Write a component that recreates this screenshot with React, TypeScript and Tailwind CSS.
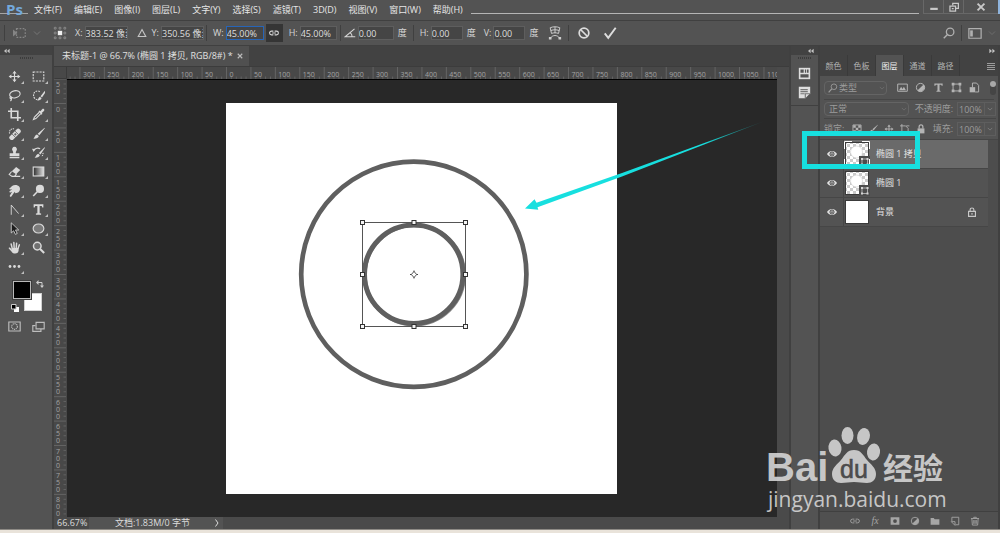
import type { ReactNode } from "react";
import clsx from "clsx";

type IconProps = { children: ReactNode; className?: string };

/* 16x16 grid, drawn in the current text colour */
function Icon({ children, className = "h-3.5 w-3.5" }: IconProps) {
  return (
    <svg
      viewBox="0 0 16 16"
      className={clsx("shrink-0", className)}
      fill="none"
      stroke="currentColor"
      strokeWidth="1.4"
      aria-hidden="true"
    >
      {children}
    </svg>
  );
}

const solid = { fill: "currentColor", stroke: "none" };

const menus = [
  "文件(F)",
  "编辑(E)",
  "图像(I)",
  "图层(L)",
  "文字(Y)",
  "选择(S)",
  "滤镜(T)",
  "3D(D)",
  "视图(V)",
  "窗口(W)",
  "帮助(H)",
];

const tools: { name: string; art: ReactNode; plain?: boolean }[] = [
  {
    name: "移动工具",
    art: (
      <>
        <path d="M8 3v10M3 8h10" />
        <path {...solid} d="M8 .8l2.6 3.4H5.4zM8 15.2l2.6-3.4H5.4zM.8 8l3.4-2.6v5.2zM15.2 8l-3.4-2.6v5.2z" />
      </>
    ),
  },
  {
    name: "矩形选框工具",
    art: <rect x="1.5" y="2.5" width="13" height="11" strokeDasharray="2.6 1.3" />,
  },
  {
    name: "套索工具",
    art: (
      <>
        <ellipse cx="8.5" cy="6.5" rx="6.5" ry="4.3" transform="rotate(-12 8.5 6.5)" />
        <path d="M3.5 9.6c-1.6.8-1.3 2.5.4 2.1 1.5-.4.8-2.4-.6-1.8M4.2 12c.2 1.2-.4 2-1.2 2.8" />
      </>
    ),
  },
  {
    name: "快速选择工具",
    art: (
      <>
        <path strokeDasharray="2 1.2" d="M9.5 3.4A4.8 5.3 0 1 0 7 13" />
        <path {...solid} d="M15.8 2.2L10.5 9l1.8 1.6 3.9-6zM9.8 9.6l2 1.8c-.8 2-2.8 3-5.3 2.6 1.4-1 1.1-3.6 3.3-4.4z" />
      </>
    ),
  },
  {
    name: "裁剪工具",
    art: <path strokeWidth="2" d="M4 0v12h12M0 4h12v12" />,
  },
  {
    name: "吸管工具",
    art: (
      <>
        <path d="M9 5.2L3 11.2 1.8 14.2 4.8 13l6-6" />
        <path {...solid} d="M8 4.2l1.3-1.1 1 .9 2.2-2.6c1.6-1.4 3.6.6 2.2 2.2L12 6l.9 1L11.8 8.2z" />
      </>
    ),
  },
  {
    name: "污点修复画笔工具",
    art: (
      <>
        <path strokeDasharray="1.6 1" d="M2 8a4.5 4.5 0 0 1 6-5.5" />
        <rect {...solid} x="0" y="6.2" width="17" height="6" rx="2.5" transform="rotate(-45 8.5 9)" />
        <path stroke="#535353" strokeWidth=".9" d="M5 8.6l4.4 4.4M8.6 5l4.4 4.4M7.5 9h3M9 7.5v3" />
      </>
    ),
  },
  {
    name: "画笔工具",
    art: <path {...solid} d="M15.5 1L7 8.4l2 1.9L15.8 1.5zM6.2 9.1l2.2 2c-.6 2.5-3.4 3.6-7 3.2 2.1-1.2 1.9-4.6 4.8-5.2z" />,
  },
  {
    name: "仿制图章工具",
    art: <path {...solid} d="M8 1a3 3 0 0 1 2.4 4.8C9.5 7 9.6 8 9.7 9H14v3.5H2V9h4.3c.1-1 .2-2-.7-3.2A3 3 0 0 1 8 1zM2 13.4h12V15H2z" />,
  },
  {
    name: "历史记录画笔工具",
    art: (
      <>
        <path d="M2 5.5C4 2.5 8 2 10 3.5" />
        <path {...solid} d="M0 3.5l4.5.2L2 7.5zM15.5 1.5L8.5 8.7l1.9 1.8L16 2zM7.7 9.4l2 1.9c-.6 2.3-3.2 3.3-6.6 3 2-1.2 1.9-4.4 4.6-4.9z" />
        <path strokeDasharray="1.5 1" d="M13.5 8.5c.2 2-.5 3.4-2 4.5" />
      </>
    ),
  },
  {
    name: "橡皮擦工具",
    art: (
      <>
        <path {...solid} d="M10 2.5l5 3.5-5 5.5-5.3-3.8z" />
        <path d="M4.5 8L1.5 11.5 5 14h3l2.5-3M8 14h7" />
      </>
    ),
  },
  {
    name: "渐变工具",
    art: (
      <>
        <defs>
          <linearGradient id="toolGradient">
            <stop offset="0" stopColor="#2a2a2a" />
            <stop offset="1" stopColor="#e2e2e2" />
          </linearGradient>
        </defs>
        <rect x="1.5" y="2.5" width="13" height="11" fill="url(#toolGradient)" />
      </>
    ),
  },
  {
    name: "涂抹工具",
    art: <path {...solid} d="M5 2.5C7.5.5 12 .8 14 3.5c1.5 2.5.6 5.5-1.5 7L9 11.5l-.5-2L6.5 12l-2.3 3.5c-1 .8-2.4 0-1.9-1.3L5 9.5l-2 1c-1.5.3-1.8-1.3-.8-2l3-2-2.5.3C1.3 6.8 1.3 5.2 2.5 4.8z" />,
  },
  {
    name: "减淡工具",
    art: (
      <>
        <circle {...solid} cx="9.8" cy="6" r="5" />
        <path strokeWidth="2" d="M6.5 9.5L1.5 14.8" />
      </>
    ),
  },
  {
    name: "钢笔工具",
    art: <path d="M4 14.5V2.5l9 10.5" strokeWidth="1.1" />,
  },
  {
    name: "横排文字工具",
    art: <path {...solid} d="M2 1.5h12V5.500h-1.300L12 3.600H9.400v8.900l1.800.5v1.500H4.800V13l1.800-.5V3.600H4L3.300 5.500H2z" />,
  },
  {
    name: "路径选择工具",
    art: <path d="M4 1v12.500l2.900-2.700 2.200 4.400 2.300-1.100-2.200-4.300h4z" fill="#1c1c1c" strokeWidth="1" />,
  },
  {
    name: "椭圆工具",
    art: <ellipse cx="8" cy="8" rx="6.6" ry="5.6" fill="#7b7b7b" />,
  },
  {
    name: "抓手工具",
    art: (
      <>
        <path {...solid} d="M4.300 8.500h8.800v3c0 2.500-1.800 4-4.400 4-2.300 0-3.300-.8-4.400-2.600L.9 9.300c-.3-1.300 1-1.700 1.800-.9l2.300 2.300z" />
        <path strokeLinecap="round" strokeWidth="1.8" d="M5.200 9L3.900 3.700M7.600 8.500L7.200 1.900M10.100 8.500l.5-5.900M12.400 9l1.600-4.300" />
      </>
    ),
  },
  {
    name: "缩放工具",
    plain: true,
    art: (
      <>
        <circle cx="6.5" cy="6.3" r="4.7" strokeWidth="1.8" fill="#707070" />
        <path strokeWidth="2.5" d="M10 9.800l5 5" />
      </>
    ),
  },
  {
    name: "编辑工具栏",
    art: (
      <g {...solid}>
        <circle cx="2.5" cy="8" r="1.7" />
        <circle cx="8" cy="8" r="1.7" />
        <circle cx="13.5" cy="8" r="1.7" />
      </g>
    ),
  },
];

function Chevron({ className = "h-2 w-2" }: { className?: string }) {
  return (
    <Icon className={className}>
      <path d="M2 5l6 6 6-6" />
    </Icon>
  );
}

function Collapse({ flip }: { flip?: boolean }) {
  return (
    <Icon className={clsx("h-1.5 w-1.5 text-[#c4c4c4]", flip && "rotate-180")}>
      <path {...solid} d="M7 2v12L0 8zM15 2v12L8 8z" />
    </Icon>
  );
}

function Grip() {
  return (
    <div className="mx-auto flex gap-px py-0.5">
      {[0, 1, 2, 3, 4, 5, 6].map((i) => (
        <span key={i} className="h-0.5 w-px bg-[#3c3c3c]" />
      ))}
    </div>
  );
}

function MenuBar() {
  return (
    <header className="flex h-5 shrink-0 items-start bg-[#535353]">
      <div className="relative flex h-full w-[34px] shrink-0 items-start pl-1.5">
        <span className="absolute left-0 top-[13px] h-px w-7 bg-[#a5a5a5]" />
        <span className="relative font-['Open_Sans',sans-serif] text-[15px]/[18px] font-bold text-[#73a9dc]">
          Ps
        </span>
      </div>
      <nav className="flex h-full shrink-0 items-center gap-3">
        {menus.map((m) => (
          <button key={m} className="whitespace-nowrap text-[#e6e6e6]">
            {m}
          </button>
        ))}
      </nav>
      <div className="ml-2 mr-1 mt-[13px] h-px flex-1 bg-[#b5b5b5]" />
      <div className="flex h-3.5 shrink-0 divide-x divide-[#686868] border-b border-l border-[#686868] text-[#c9c9c9]">
        <button aria-label="最小化" className="flex w-5 items-center justify-center">
          <Icon className="h-2.5 w-2.5">
            <path strokeWidth="3.5" d="M2 11h12" />
          </Icon>
        </button>
        <button aria-label="还原" className="flex w-5 items-center justify-center">
          <Icon className="h-2.5 w-2.5">
            <path strokeWidth="2" d="M6 5V2h9v8h-4M1.500 6.500h9v8h-9zM4.500 10.500h3" />
          </Icon>
        </button>
        <button aria-label="关闭" className="flex w-[34px] items-center justify-center">
          <Icon className="h-2.5 w-2.5">
            <path strokeWidth="3" d="M2.500 2.500l11 11M13.500 2.500l-11 11" />
          </Icon>
        </button>
      </div>
      <div className="h-3.5 w-0.5 shrink-0 bg-[#8fb4dd]" />
    </header>
  );
}

type FieldProps = {
  label: ReactNode;
  name: string;
  value: string;
  width: string;
  unit?: string;
  active?: boolean;
};

function Field({ label, name, value, width, unit, active }: FieldProps) {
  return (
    <label className="flex shrink-0 items-center gap-0.5 text-[#d6d6d6]">
      {label}
      <input
        aria-label={name}
        defaultValue={value}
        className={clsx(
          "h-3.5 border bg-[#454545] text-[#dedede] outline-none",
          width,
          active ? "border-[#2765b8]" : "border-[#5e5e5e]",
        )}
      />
      {unit && <span className="ml-0.5">{unit}</span>}
    </label>
  );
}

function Divider() {
  return <span className="h-4 w-px shrink-0 bg-[#404040]" />;
}

function OptionsBar() {
  return (
    <div className="flex h-[26px] shrink-0 items-center border-y border-[#404040] bg-[#535353] pl-1">
      <Divider />
      <button aria-label="变换" className="ml-2 flex items-center gap-1.5 text-[#858585]">
        <Icon>
          <path strokeDasharray="2 1.5" d="M4 3h10v10H4z" />
          <path {...solid} d="M0 4l5 4-5 4z" />
        </Icon>
        <Chevron />
      </button>
      <span className="ml-1.5">
        <Divider />
      </span>
      <Icon className="ml-1.5 h-3.5 w-3.5 text-[#8d8d8d]">
        <g strokeWidth="1">
          <path d="M1.500 1.500h2v2h-2zM7 1.500h2v2H7zM12.500 1.500h2v2h-2zM1.500 7h2v2h-2zM12.500 7h2v2h-2zM1.500 12.500h2v2h-2zM7 12.500h2v2H7zM12.500 12.500h2v2h-2z" />
        </g>
        <path fill="#f0f0f0" stroke="none" d="M5.500 5.500h5v5h-5z" />
      </Icon>
      <div className="ml-2 flex items-center">
        <Field label="X:" name="X" value="383.52 像素" width="w-[43px]" />
      </div>
      <button aria-label="相对定位" className="ml-1 flex w-5 justify-center text-[#c4c4c4]">
        <Icon className="h-2.5 w-2.5">
          <path strokeWidth="1.8" d="M8 2.500l6 11H2z" />
        </Icon>
      </button>
      <div className="flex items-center">
        <Field label="Y:" name="Y" value="350.56 像素" width="w-[43px]" />
      </div>
      <div className="ml-0.5 flex items-center gap-1.5">
        <Divider />
        <Field label="W:" name="W" value="45.00%" width="w-[38px]" active />
      </div>
      <button
        aria-label="保持长宽比"
        className="ml-0.5 mr-1.5 flex h-[18px] w-[17px] shrink-0 items-center justify-center bg-[#353535] text-[#d6d6d6]"
      >
        <Icon className="h-2.5 w-2.5">
          <path strokeWidth="1.8" d="M7 5H4a3 3 0 0 0 0 6h3M9 5h3a3 3 0 0 1 0 6H9M5 8h6" />
        </Icon>
      </button>
      <div className="flex items-center gap-[3px]">
        <Field label="H:" name="H" value="45.00%" width="w-[37px]" />
        <Divider />
        <Field
          label={
            <Icon className="h-3 w-3">
              <path d="M14 2.500L1.500 13H15M8 7.500c2 1.200 2.800 3 2.800 5.500" />
            </Icon>
          }
          name="旋转"
          value="0.00"
          width="w-9"
          unit="度"
        />
      </div>
      <div className="ml-1.5 flex items-center gap-1.5">
        <Divider />
        <Field label="H:" name="水平斜切" value="0.00" width="w-8" unit="度" />
        <span className="ml-0.5">
          <Field label="V:" name="垂直斜切" value="0.00" width="w-8" unit="度" />
        </span>
      </div>
      <button aria-label="变形" className="ml-2.5 mr-1.5 text-[#cdcdcd]">
        <Icon>
          <path strokeWidth="1.1" d="M2.500 2c3.500-1.500 7.500-1.500 11 0l-1.500 6.500C9 7.500 7 7.500 4 8.500zM8 1v7M3.200 5.200c3.500-1.200 6.100-1.200 9.600 0M3 13.500c2.500-3.500 7.500-3.500 10 0" />
          <path {...solid} d="M1 12.500h3v3H1zM12 12.500h3v3h-3z" />
        </Icon>
      </button>
      <Divider />
      <button aria-label="取消变换" className="ml-2 text-[#dcdcdc]">
        <Icon>
          <circle cx="8" cy="8" r="5.5" strokeWidth="2" />
          <path strokeWidth="2" d="M4 4l8 8" />
        </Icon>
      </button>
      <button aria-label="提交变换" className="ml-3 text-[#dcdcdc]">
        <Icon>
          <path strokeWidth="2.2" d="M2 8.500l4 5L14.500 2" />
        </Icon>
      </button>
      <div className="ml-auto mr-1 flex items-center gap-1.5 text-[#b0b0b0]">
        <button aria-label="搜索">
          <Icon className="h-3 w-3">
            <circle cx="9.5" cy="6.5" r="5" strokeWidth="1.7" />
            <path strokeWidth="2" d="M6 10l-5 5" />
          </Icon>
        </button>
        <Divider />
        <button aria-label="工作区" className="flex items-center gap-1.5">
          <Icon>
            <path d="M1 3h14v11H1z" />
            <path {...solid} d="M2.500 5h3v7h-3z" />
          </Icon>
          <Chevron className="h-2 w-2 text-[#777]" />
        </button>
      </div>
    </div>
  );
}

function ToolPanel() {
  return (
    <aside className="flex w-[54px] shrink-0 flex-col border-r-2 border-[#404040] bg-[#535353]">
      <div className="flex h-[9px] items-center bg-[#424242] pl-1">
        <Collapse />
      </div>
      <Grip />
      <div className="grid grid-cols-[24px_24px] pl-0.5 pt-1.5">
        {tools.map((t) => (
          <button
            key={t.name}
            aria-label={t.name}
            className="relative flex h-[19px] w-6 items-center justify-center text-[#dadada]"
          >
            <Icon className="h-[13px] w-[13px]">{t.art}</Icon>
            {!t.plain && (
              <svg viewBox="0 0 3 3" className="absolute bottom-0.5 right-0.5 h-[3px] w-[3px]">
                <path d="M3 0v3H0z" fill="#bdbdbd" />
              </svg>
            )}
          </button>
        ))}
      </div>
      {/* foreground / background swatches */}
      <div className="relative mt-1 h-[34px]">
        <button
          aria-label="背景色"
          className="absolute left-6 top-[13px] h-[18px] w-[18px] border border-[#d0d0d0] bg-white"
        />
        <button
          aria-label="前景色"
          className="absolute left-[13px] top-px h-[18px] w-[18px] border border-[#b8b8b8] bg-black outline-1 outline-[#3c3c3c]"
        />
        <button aria-label="切换前景色和背景色" className="absolute left-9 top-0 text-[#d0d0d0]">
          <Icon className="h-2 w-2">
            <path strokeWidth="2" d="M4 5h8v8" />
            <path {...solid} d="M0 5l5-5v10zM12 16l-4-5h8z" />
          </Icon>
        </button>
        <button aria-label="默认前景色和背景色" className="absolute left-[11px] top-6">
          <svg viewBox="0 0 8 8" className="h-2 w-2">
            <path d="M3 3h5v5H3z" fill="#fff" />
            <path d="M.5.5h4.5v4.5H.5z" fill="#000" stroke="#ccc" />
          </svg>
        </button>
      </div>
      <div className="mt-1 flex pl-0.5 text-[#bdbdbd]">
        <button aria-label="快速蒙版" className="flex h-4 w-6 items-center justify-center">
          <Icon className="h-[13px] w-[13px]">
            <path d="M1 2.500h14v11H1z" />
            <circle cx="8" cy="8" r="3.5" strokeDasharray="1.5 .8" />
          </Icon>
        </button>
        <button aria-label="屏幕模式" className="flex h-4 w-6 items-center justify-center">
          <Icon className="h-[13px] w-[13px]">
            <path d="M4 7H1v7h10v-3M5 3h10v8H5z" />
          </Icon>
        </button>
      </div>
    </aside>
  );
}

/* distance between two labelled ruler ticks, 50 document pixels */
const STEP = 24.43;

function TopRuler() {
  return (
    <svg className="h-3 w-full bg-[#484848]" aria-hidden="true">
      <path d="M.5 11.500h12v-12" fill="none" stroke="#3a3a3a" />
      {Array.from({ length: 30 }, (_, i) => i - 7).map((n) => {
        const x = 172.5 + n * STEP;
        return (
          <g key={n}>
            {n > -7 && <path d={`M${x} 0v12`} stroke="#646464" />}
            {[1, 2, 3, 4].map(
              (k) =>
                x + (k * STEP) / 5 > 13 && (
                  <path key={k} d={`M${x + (k * STEP) / 5} 9.500v2.500`} stroke="#626262" />
                ),
            )}
            {n > -7 && (
              <text x={x + 3} y="10" fontSize="7" fill="#a3a3a3">
                {Math.abs(n * 50)}
              </text>
            )}
          </g>
        );
      })}
    </svg>
  );
}

function SideRuler() {
  return (
    <svg className="h-full w-[13px] shrink-0 bg-[#484848]" aria-hidden="true">
      {Array.from({ length: 18 }, (_, i) => i - 1).map((n) => {
        const y = 24.5 + n * STEP;
        return (
          <g key={n}>
            <path d={`M0 ${y}h12`} stroke="#646464" />
            {[1, 2, 3, 4].map((k) => (
              <path key={k} d={`M9.500 ${y + (k * STEP) / 5}h2.500`} stroke="#626262" />
            ))}
            {String(Math.abs(n * 50))
              .split("")
              .map((d, i) => (
                <text key={i} x="2" y={y + 8 + i * 7} fontSize="7" fill="#a3a3a3">
                  {d}
                </text>
              ))}
          </g>
        );
      })}
    </svg>
  );
}

const handles = [
  [136.5, 119.5],
  [188, 119.5],
  [239.5, 119.5],
  [136.5, 171.5],
  [239.5, 171.5],
  [136.5, 223.5],
  [188, 223.5],
  [239.5, 223.5],
];

function Artboard() {
  return (
    <svg viewBox="0 0 391 391" className="aspect-square h-[calc(100%-46px)] bg-white" role="img" aria-label="椭圆">
      <g fill="none" stroke="#5f5f5f">
        <circle cx="187.8" cy="171.3" r="112.6" strokeWidth="4.7" />
        <circle cx="188.4" cy="171.8" r="49.6" strokeWidth="4" stroke="#8c8c8c" />
        <circle cx="187.7" cy="171.2" r="49.2" strokeWidth="5" />
      </g>
      <rect x="136.5" y="119.5" width="103" height="104" fill="none" stroke="#555" />
      {handles.map(([x, y]) => (
        <rect key={`${x}-${y}`} x={x - 2} y={y - 2} width="4" height="4" fill="#f4f4f4" stroke="#333" />
      ))}
      <g stroke="#444" fill="none">
        <path strokeWidth=".9" d="M188 168.500l2.700 3-2.700 3-2.700-3z" />
        <path d="M188 167.500v1.500M188 174v1.500M184 171.500h1.500M190.500 171.500h1.500" />
      </g>
    </svg>
  );
}

function Document() {
  return (
    <main className="flex min-w-0 flex-1 flex-col bg-[#424242]">
      <div className="flex h-[21px] shrink-0 border-b border-[#3c3c3c]">
        <div className="flex items-center gap-1 bg-[#505050] pl-2 pr-1.5 text-[#e0e0e0]">
          <span className="whitespace-nowrap">未标题-1 @ 66.7% (椭圆 1 拷贝, RGB/8#) *</span>
          <button aria-label="关闭文档" className="text-[#bbb]">
            <Icon className="h-1.5 w-1.5">
              <path strokeWidth="3" d="M2 2l12 12M14 2L2 14" />
            </Icon>
          </button>
        </div>
      </div>
      <div className="flex min-h-0 flex-1">
        <div className="flex min-w-0 flex-1 flex-col">
          <TopRuler />
          <div className="flex min-h-0 flex-1">
            <SideRuler />
            <div className="relative flex min-w-0 flex-1 items-center justify-center border-t border-black bg-[#282828] pr-px">
              <Artboard />
              <svg viewBox="0 0 240 90" className="absolute right-3 top-10 h-[90px] w-60" aria-hidden="true">
                <defs>
                  <linearGradient id="arrowFade" x1="0" x2="1">
                    <stop offset=".75" stopColor="#17dfdf" />
                    <stop offset="1" stopColor="#17dfdf" stopOpacity=".1" />
                  </linearGradient>
                </defs>
                <path fill="url(#arrowFade)" d="M0 88.500L9.500 79.300l2 3.500L97 52.900 239 1.200 97 56.400 12.500 87.300l.8 2.500z" />
              </svg>
            </div>
          </div>
        </div>
        <div className="w-3 shrink-0 bg-[#4a4a4a]" />
      </div>
      <footer className="flex h-3 shrink-0 items-center bg-[#4a4a4a] text-[#dcdcdc]">
        <span className="w-[35px] pl-[3px]">66.67%</span>
        <div className="flex h-full w-[134px] items-center justify-between bg-[#535353] pl-[26px] pr-0.5">
          <span>文档:1.83M/0 字节</span>
          <button aria-label="文档信息">
            <Icon className="h-2 w-2">
              <path strokeWidth="2" d="M5 1l5 7-5 7" />
            </Icon>
          </button>
        </div>
      </footer>
    </main>
  );
}

function Dock() {
  return (
    <aside className="flex w-[31px] shrink-0 flex-col border-x-2 border-[#404040] bg-[#535353]">
      <div className="flex h-[9px] items-center justify-end bg-[#424242] pr-1">
        <Collapse />
      </div>
      <div className="flex flex-col items-center gap-1.5 border-b border-[#404040] pb-1.5 text-[#dedede]">
        <Grip />
        <button aria-label="库">
          <Icon className="h-[13px] w-[13px]">
            <path {...solid} d="M1 1h14v14H1z" />
            <path fill="#555" stroke="none" d="M3 3h4v4H3zM8.500 3h1.500v4H8.500zM11 3h2v4h-2zM3 9h10v4H3z" />
          </Icon>
        </button>
        <button aria-label="学习">
          <Icon className="h-[13px] w-[13px]">
            <path {...solid} d="M1 1h14v8l-6 6H1z" />
            <path stroke="#777" d="M3 4.500h9M3 7h9M3 9.500h5M9 15V9.500h6" />
          </Icon>
        </button>
      </div>
    </aside>
  );
}

function Eye() {
  return (
    <Icon className="h-2.5 w-2.5">
      <path {...solid} d="M0 8c3.500-6.200 12.500-6.200 16 0-3.500 6.200-12.500 6.200-16 0z" />
      <circle cx="8" cy="8" r="3.3" fill="#dedede" stroke="#444" strokeWidth="1.6" />
      <circle cx="8" cy="8" r="1.4" fill="#444" stroke="none" />
    </Icon>
  );
}

function Thumb({ shape, framed }: { shape?: boolean; framed?: boolean }) {
  return (
    <svg viewBox="0 0 26 26" className="h-[26px] w-[26px] shrink-0" aria-hidden="true">
      <defs>
        <pattern id="checker" width="6" height="6" patternUnits="userSpaceOnUse">
          <path d="M0 0h6v6H0z" fill="#fff" />
          <path d="M0 0h3v3H0zM3 3h3v3H3z" fill="#cbcbcb" />
        </pattern>
      </defs>
      <rect x="1.5" y="1.5" width="23" height="23" fill={shape ? "url(#checker)" : "#fff"} stroke="#3a3a3a" />
      {shape && (
        <>
          <circle cx="12.5" cy="11" r="6" fill="#fff" stroke="#ccc" strokeWidth=".6" />
          <path d="M15 15h11v11H15z" fill="#4c4c4c" />
          <path d="M18 18h5.500v5.500H18z" fill="none" stroke="#c4c4c4" strokeWidth=".8" />
          <path d="M17 17h2v2h-2zM22.500 17h2v2h-2zM17 22.500h2v2h-2zM22.500 22.500h2v2h-2z" fill="#d4d4d4" />
        </>
      )}
      {framed && (
        <path d="M.5 8V.5H8M18 .5h7.500V8M.5 18v7.500H8M25.500 18v7.500H22" fill="none" stroke="#fff" />
      )}
    </svg>
  );
}

const layers = [
  { name: "椭圆 1 拷贝", shape: true, selected: true, locked: false },
  { name: "椭圆 1", shape: true, selected: false, locked: false },
  { name: "背景", shape: false, selected: false, locked: true },
];

const filters: { name: string; art: ReactNode }[] = [
  {
    name: "像素图层",
    art: (
      <>
        <path d="M1 3h14v10.500H1z" />
        <path {...solid} d="M3 12l3-5 2 3 2-3 3 5z" />
      </>
    ),
  },
  {
    name: "调整图层",
    art: (
      <>
        <circle cx="8" cy="8" r="6" />
        <path {...solid} d="M12.500 3.500A6.400 6.400 0 0 1 3.500 12.500z" />
      </>
    ),
  },
  {
    name: "文字图层",
    art: <path {...solid} d="M2 2h12v3.500h-1.500L12 4H9.500v8.500l1.500.5v1H5v-1l1.500-.5V4H4l-.5 1.500H2z" />,
  },
  {
    name: "形状图层",
    art: (
      <>
        <path d="M3 3h10v10H3z" />
        <path {...solid} d="M1 1h4v4H1zM11 1h4v4h-4zM1 11h4v4H1zM11 11h4v4h-4z" />
      </>
    ),
  },
  {
    name: "智能对象",
    art: (
      <>
        <path d="M5 8V1.500h6L14 5v9.500H9" />
        <path {...solid} d="M1 7.500h8V15H1z" />
      </>
    ),
  },
];

const locks: { name: string; art: ReactNode }[] = [
  {
    name: "锁定透明像素",
    art: (
      <>
        <path d="M1.500 1.500h13v13h-13z" />
        <path {...solid} d="M2 2h4v4H2zM10 2h4v4h-4zM6 6h4v4H6zM2 10h4v4H2zM10 10h4v4h-4z" />
      </>
    ),
  },
  { name: "锁定图像像素", art: tools[7].art },
  { name: "锁定位置", art: tools[0].art },
  { name: "锁定嵌套", art: <path d="M3 0v13h9l2 2M0 3h9l4 4v9M10 3h5" /> },
  {
    name: "锁定全部",
    art: (
      <>
        <path {...solid} d="M2.500 7h11v8h-11z" />
        <path strokeWidth="2" d="M5 7V4.500a3 3 0 0 1 6 0V7" />
      </>
    ),
  },
];

const actions: { name: string; art: ReactNode }[] = [
  {
    name: "链接图层",
    art: <path d="M7 5H4a3 3 0 0 0 0 6h3M9 5h3a3 3 0 0 1 0 6H9M5 8h6" />,
  },
  { name: "图层样式", art: null },
  {
    name: "添加蒙版",
    art: (
      <>
        <path {...solid} d="M1 2h14v12H1z" />
        <circle cx="8" cy="8" r="3" fill="#4d4d4d" stroke="none" />
      </>
    ),
  },
  { name: "新建调整图层", art: filters[1].art },
  { name: "新建组", art: <path {...solid} d="M1 3h5l1.500 2H15v9H1z" /> },
  {
    name: "新建图层",
    art: <path d="M3 8V2h11v12H9M2 9h6v6z" />,
  },
  {
    name: "删除图层",
    art: <path d="M1.500 4h13M6 4V2h4v2M3 4.500l.8 10h8.400l.8-10M6 6.500v6M8 6.500v6M10 6.500v6" />,
  },
];

function Percent({ label }: { label: string }) {
  return (
    <div className="ml-auto flex shrink-0 items-center">
      <label className="flex items-center gap-1">
        {label}
        <input
          defaultValue="100%"
          className="h-3.5 w-7 border border-[#5e5e5e] bg-transparent px-px outline-none"
        />
      </label>
      <button
        aria-label={`${label} 滑块`}
        className="flex h-3.5 w-[11px] items-center justify-center border-y border-r border-[#5e5e5e]"
      >
        <Chevron className="h-1.5 w-1.5" />
      </button>
    </div>
  );
}

function Dropdown({ name, value, className }: { name: string; value: string; className: string }) {
  return (
    <div className="relative flex items-center">
      <select
        aria-label={name}
        className={clsx("h-3.5 appearance-none rounded-sm border border-[#646464] bg-transparent outline-none", className)}
      >
        <option>{value}</option>
      </select>
      <span className="pointer-events-none absolute right-0.5 text-[#808080]">
        <Chevron className="h-1.5 w-1.5" />
      </span>
    </div>
  );
}

function LayersPanel() {
  return (
    <aside className="relative flex w-[178px] shrink-0 flex-col bg-[#4d4d4d] text-[#9c9c9c]">
      <div className="flex h-[9px] shrink-0 items-center justify-end bg-[#424242] pr-[3px]">
        <Collapse flip />
      </div>
      <div className="flex h-[21px] shrink-0 items-center bg-[#424242] text-[8px]">
        {["颜色", "色板", "图层", "通道", "路径"].map((t) => (
          <button
            key={t}
            className={clsx(
              "h-full w-7 border-r border-[#3a3a3a]",
              t === "图层" ? "bg-[#535353] text-[#efefef]" : "text-[#b4b4b4]",
            )}
          >
            {t}
          </button>
        ))}
        <button aria-label="面板菜单" className="ml-auto mr-[3px]">
          <Icon className="h-2 w-2">
            <path strokeWidth="2.2" d="M0 3h16M0 7h16M0 11h16M0 15h16" />
          </Icon>
        </button>
      </div>

      <div className="flex flex-col divide-y divide-[#464646] border-b border-[#464646] bg-[#535353] px-1">
        <div className="flex h-6 items-center">
          <div className="relative flex items-center">
            <Icon className="absolute left-1 h-2.5 w-2.5">
              <circle cx="9.5" cy="6" r="4.5" />
              <path strokeWidth="2" d="M6 9.500l-5 5.500" />
            </Icon>
            <Dropdown name="筛选类型" value="类型" className="w-[63px] pl-3.5" />
          </div>
          <div className="ml-2.5 flex gap-[7px] text-[#b4b4b4]">
            {filters.map((f) => (
              <button key={f.name} aria-label={f.name}>
                <Icon className="h-[11px] w-[11px]">{f.art}</Icon>
              </button>
            ))}
          </div>
          <button
            aria-label="打开或关闭筛选"
            className="-mr-0.5 ml-auto flex h-3.5 w-1.5 items-start rounded-full bg-[#454545]"
          >
            <span className="h-1.5 w-1.5 rounded-full bg-[#a8a8a8]" />
          </button>
        </div>
        <div className="-mr-0.5 flex h-[19px] items-center">
          <Dropdown name="混合模式" value="正常" className="w-[85px] pl-1" />
          <Percent label="不透明度:" />
        </div>
        <div className="-mr-0.5 flex h-5 items-center">
          <span>锁定:</span>
          <div className="ml-2 flex gap-1.5 text-[#b4b4b4]">
            {locks.map((l) => (
              <button key={l.name} aria-label={l.name}>
                <Icon className="h-2.5 w-2.5">{l.art}</Icon>
              </button>
            ))}
          </div>
          <Percent label="填充:" />
        </div>
      </div>

      <ul className="mr-2.5 text-[#e2e2e2]">
        {layers.map((l) => (
          <li
            key={l.name}
            className={clsx(
              "flex h-[29px] items-center border-b border-[#464646]",
              l.selected ? "bg-[#6a6a6a]" : "bg-[#535353]",
            )}
          >
            <button
              aria-label={`显示 ${l.name}`}
              className="flex h-full w-6 shrink-0 items-center justify-center border-r border-[#464646] bg-[#535353]"
            >
              <Eye />
            </button>
            <button className="flex flex-1 items-center gap-1.5 text-left">
              <Thumb shape={l.shape} framed={l.selected} />
              {l.name}
            </button>
            {l.locked && (
              <Icon className="mr-[11px] h-2.5 w-2.5 text-[#c8c8c8]">
                <path strokeWidth="1.8" d="M2.500 7h11v8h-11zM5 7V4.500a3 3 0 0 1 6 0V7M8 9.500v3" />
              </Icon>
            )}
          </li>
        ))}
      </ul>
      {/* marker around the selected layer */}
      <div className="pointer-events-none absolute -left-[18px] top-[85px] h-[38px] w-[118px] border-[5px] border-[#17dfdf]" />

      <div className="mt-auto flex h-[18px] items-center justify-end gap-2.5 border-t border-[#404040] bg-[#505050] pr-[18px] text-[#a6a6a6]">
        {actions.map((a) => (
          <button key={a.name} aria-label={a.name} className="flex w-2.5 justify-center">
            {a.art ? (
              <Icon className="h-2.5 w-2.5">{a.art}</Icon>
            ) : (
              <i className="font-['Liberation_Serif',serif] text-[10px]/[10px]">fx</i>
            )}
          </button>
        ))}
      </div>
    </aside>
  );
}

function Watermark() {
  return (
    <svg
      viewBox="0 0 184 88"
      className="pointer-events-none absolute bottom-5 right-[50px] h-[88px] w-[184px] opacity-90"
      fill="#d4d4d4"
      aria-label="Baidu 经验"
    >
      <text x="0" y="56" fontSize="40" fontWeight="700" fontFamily="'Liberation Sans', Arial, sans-serif">
        Bai
      </text>
      <ellipse cx="69" cy="23" rx="6.5" ry="8.5" transform="rotate(-8 69 23)" />
      <ellipse cx="81.5" cy="10.5" rx="6" ry="8.5" />
      <ellipse cx="97.5" cy="11.5" rx="6.3" ry="8.5" transform="rotate(14 97.5 11.5)" />
      <ellipse cx="107.5" cy="27" rx="6.5" ry="8.5" transform="rotate(8 107.5 27)" />
      <path d="M88 25c7 0 9 5 13 10 4 4.500 9 8 9 14 0 6-4 9-9 9-5 0-8-1-13-1s-8 1-13 1c-5 0-9-3-9-9 0-6 5-9.500 9-14 4-5 6-10 13-10z" />
      <text x="74" y="53" fontSize="25" fill="#4c4c4c" stroke="#4c4c4c" strokeWidth=".6" fontFamily="'Liberation Sans', Arial, sans-serif">
        du
      </text>
      <text x="117" y="54" fontSize="30" fontWeight="700" fontFamily="'Noto Sans CJK SC', sans-serif">
        经验
      </text>
      <text x="2" y="82" fontSize="21" fontFamily="'Open Sans', sans-serif">
        jingyan.baidu.com
      </text>
    </svg>
  );
}

export default function App() {
  return (
    <div className="relative flex h-screen flex-col overflow-hidden bg-[#404040] font-['Open_Sans','Noto_Sans_CJK_SC',sans-serif] text-[9px]/[12px]">
      <MenuBar />
      <OptionsBar />
      <div className="flex min-h-0 flex-1 pr-0.5">
        <ToolPanel />
        <Document />
        <Dock />
        <LayersPanel />
      </div>
      <div className="h-1 shrink-0 border-t border-[#8d8a85] bg-[#e9e3da]" />
      <Watermark />
    </div>
  );
}
